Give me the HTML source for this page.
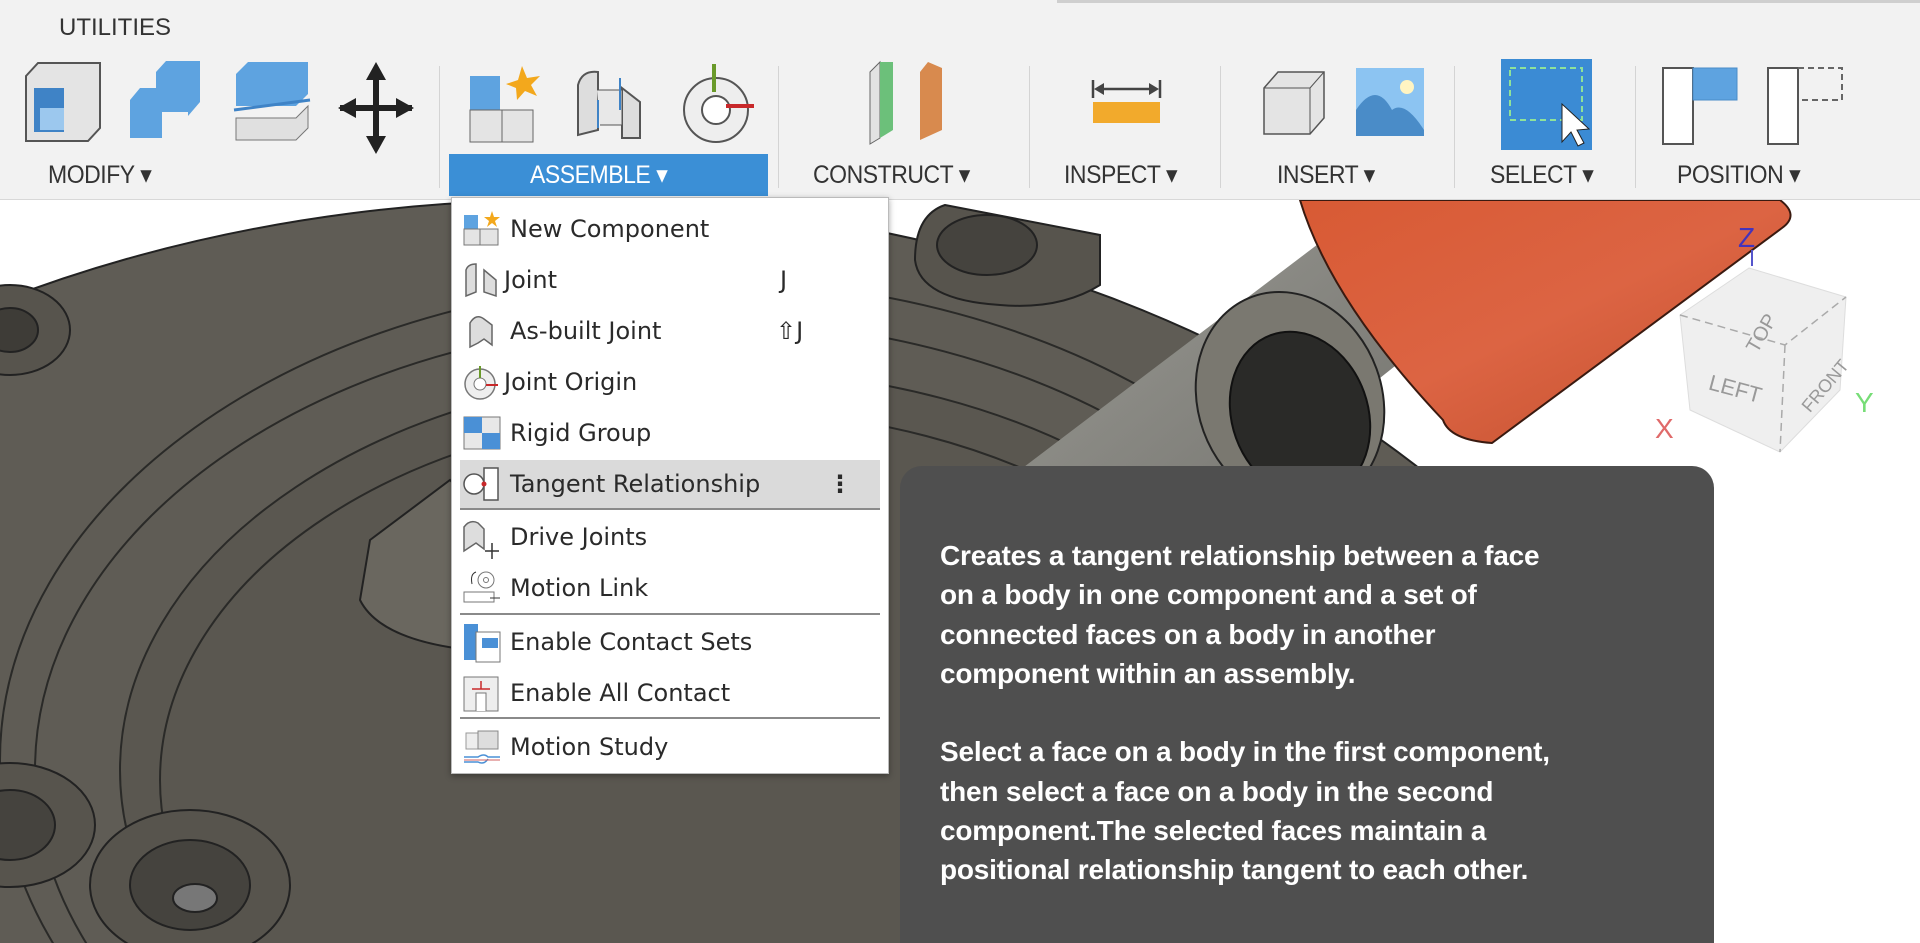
<!DOCTYPE html>
<html><head><meta charset="utf-8"><style>
*{margin:0;padding:0;box-sizing:border-box}
html,body{width:1920px;height:943px;overflow:hidden}
body{background:#fff;font-family:"DejaVu Sans","Liberation Sans",sans-serif;position:relative}
#tb{position:absolute;left:0;top:0;width:1920px;height:200px;background:#f2f2f2;border-bottom:1px solid #d8d8d8}
.lbl{position:absolute;top:160px;font-family:"Liberation Sans",sans-serif;font-size:25px;color:#333;letter-spacing:-0.5px;transform:scaleX(0.92);transform-origin:left}
.sep{position:absolute;top:66px;width:1px;height:122px;background:#d4d4d4}
#menu{position:absolute;left:451px;top:197px;width:438px;height:577px;background:#fff;border:1px solid #bbb;box-shadow:0 2px 6px rgba(0,0,0,.35)}
.it{position:absolute;left:0;width:436px;height:50px;font-size:24px;color:#2a2a2a;line-height:50px}
.it span.t{position:absolute;left:58px}
.it svg{position:absolute;left:10px;top:7px}
.ms{position:absolute;left:0;width:428px;height:2px;background:#8a8a8a}
#tip{position:absolute;left:900px;top:466px;width:814px;height:477px;background:#4f4f4f;border-radius:22px 22px 0 0;color:#fff;font-family:"Liberation Sans",sans-serif;font-weight:bold;font-size:28px;line-height:39.3px;padding:70px 0 0 40px;letter-spacing:-0.2px;overflow:hidden}
</style></head><body>
<svg width="1920" height="943" style="position:absolute;left:0;top:0">
<defs><linearGradient id="og" x1="0" y1="0" x2="1" y2="1"><stop offset="0" stop-color="#d85a34"/><stop offset=".5" stop-color="#dc6443"/><stop offset="1" stop-color="#c04e2c"/></linearGradient>
<linearGradient id="tg" x1="0" y1="0" x2="1" y2="1"><stop offset="0" stop-color="#9a9a94"/><stop offset="1" stop-color="#6e6d68"/></linearGradient></defs>
<ellipse cx="560" cy="1000" rx="1150" ry="800" fill="#5f5c55" stroke="#222" stroke-width="2"/>
<ellipse cx="700" cy="760" rx="700" ry="480" fill="none" stroke="#2a2a28" stroke-width="2"/>
<ellipse cx="700" cy="770" rx="665" ry="450" fill="none" stroke="#2a2a28" stroke-width="2"/>
<ellipse cx="720" cy="770" rx="600" ry="400" fill="#5a5750" stroke="#2a2a28" stroke-width="2"/>
<ellipse cx="720" cy="780" rx="560" ry="370" fill="none" stroke="#2a2a28" stroke-width="2"/>
<path d="M370 540 L450 480 L560 600 L470 650 Q380 640 360 600Z" fill="#6a675f" stroke="#222" stroke-width="2"/>
<g fill="#57544d" stroke="#222" stroke-width="2">
<ellipse cx="10" cy="330" rx="60" ry="45"/><ellipse cx="10" cy="330" rx="28" ry="22" fill="#3e3c37"/>
<path d="M945 205 L1100 235 L1100 285 Q1060 310 1000 305 Q920 300 915 260 Q915 215 945 205Z"/><ellipse cx="987" cy="245" rx="50" ry="30" fill="#45433e"/>
<ellipse cx="10" cy="825" rx="85" ry="62"/><ellipse cx="10" cy="825" rx="45" ry="35" fill="#45433e"/>
<ellipse cx="190" cy="885" rx="100" ry="75"/><ellipse cx="190" cy="885" rx="60" ry="45" fill="#45433e"/><ellipse cx="195" cy="898" rx="22" ry="14" fill="#777"/>
</g>
<path d="M1020 470 L1330 235 L1440 330 L1140 570Z" fill="url(#tg)"/>
<ellipse cx="1290" cy="400" rx="92" ry="110" transform="rotate(-20 1290 400)" fill="#7a7870" stroke="#222" stroke-width="2"/>
<ellipse cx="1300" cy="415" rx="68" ry="85" transform="rotate(-20 1300 415)" fill="#2a2a28" stroke="#111" stroke-width="2"/>
<path d="M1300 200 L1780 200 Q1800 215 1782 228 L1492 443 Q1450 440 1443 420 Q1330 300 1300 200Z" fill="url(#og)" stroke="#3a1a10" stroke-width="2"/>
<path d="M1749 268 L1846 297 L1840 390 L1780 452 L1690 410 L1680 315Z" fill="#efefef" stroke="#ddd"/>
<path d="M1680 315 L1785 345 L1846 297 M1785 345 L1780 452" stroke="#aaa" stroke-width="1.5" stroke-dasharray="8 5" fill="none"/>
<text x="1720" y="320" font-family="Liberation Sans" font-size="20" fill="#999" transform="rotate(-60 1768 305)">TOP</text>
<text x="1708" y="395" font-family="Liberation Sans" font-size="22" fill="#999" transform="rotate(15 1730 390)">LEFT</text>
<text x="1792" y="405" font-family="Liberation Sans" font-size="18" fill="#999" transform="rotate(-50 1810 390)">FRONT</text>
<line x1="1752" y1="250" x2="1752" y2="266" stroke="#5555cc" stroke-width="2"/>
<text x="1738" y="247" font-family="Liberation Sans" font-size="28" fill="#4433bb">Z</text>
<text x="1655" y="438" font-family="Liberation Sans" font-size="28" fill="#e06a6a">X</text>
<text x="1855" y="412" font-family="Liberation Sans" font-size="28" fill="#77dd77">Y</text>
</svg>

<div id="tb">
<div style="position:absolute;left:1057px;top:0;width:863px;height:3px;background:#cfcfcf"></div>
<div style="position:absolute;left:59px;top:14px;font-family:'Liberation Sans',sans-serif;font-size:24px;color:#333">UTILITIES</div>
<svg width="1920" height="160" style="position:absolute;left:0;top:0">
<path d="M26 76 L38 63 L100 63 L100 128 L88 141 L26 141Z" fill="#e4e4e4" stroke="#555" stroke-width="2"/><rect x="34" y="88" width="30" height="44" fill="#3f83c6"/><rect x="40" y="108" width="24" height="22" fill="#9cc8ee"/>
<path d="M130 100 L140 88 L156 88 L156 72 L166 61 L200 61 L200 102 L188 116 L188 112 L162 112 L162 138 L130 138Z" fill="#5ea3e0"/>
<path d="M236 74 L248 62 L308 62 L308 94 L296 106 L236 106Z" fill="#5ea3e0"/><path d="M234 110 L310 100" stroke="#3f83c6" stroke-width="3"/><path d="M236 118 L296 118 L308 106 L308 128 L296 140 L236 140Z" fill="#e0e0e0" stroke="#777"/>
<path d="M376 78 L376 138 M340 108 L412 108" stroke="#222" stroke-width="6"/><path d="M376 62 L366 80 L386 80Z M376 154 L366 136 L386 136Z M338 108 L356 98 L356 118Z M414 108 L396 98 L396 118Z" fill="#222"/>
<rect x="470" y="76" width="30" height="40" fill="#5ea3e0"/><path d="M470 110 L470 142 L533 142 L533 110Z" fill="#e4e4e4" stroke="#666"/><line x1="502" y1="110" x2="502" y2="142" stroke="#666"/>
<polygon points="522,66 527,78 540,76 531,85 537,96 525,91 517,100 516,88 506,84 518,80" fill="#f3a81c"/>
<path d="M578 135 L578 85 Q582 70 598 72 L598 130Z" fill="#ddd" stroke="#555" stroke-width="2"/><path d="M622 138 L622 88 L640 102 L640 138Z" fill="#ddd" stroke="#555" stroke-width="2"/><path d="M597 90 L622 90 L622 125 L600 125" fill="#e8e8e8" stroke="#555"/><line x1="620" y1="78" x2="620" y2="110" stroke="#3f83c6" stroke-width="2"/><line x1="598" y1="100" x2="598" y2="128" stroke="#3f83c6" stroke-width="2"/>
<circle cx="716" cy="110" r="32" fill="#eee" stroke="#555" stroke-width="2"/><circle cx="716" cy="110" r="14" fill="#fff" stroke="#555" stroke-width="2"/><line x1="714" y1="64" x2="714" y2="92" stroke="#6a9a2a" stroke-width="4"/><line x1="726" y1="106" x2="754" y2="106" stroke="#c8282a" stroke-width="4"/>
<path d="M870 72 L870 144 L880 138 L880 62 Z" fill="#e2e2e2" stroke="#666"/><path d="M880 62 L893 62 L893 130 L880 138Z" fill="#6cc07a"/><path d="M928 62 L942 68 L942 130 L920 140 L920 72Z" fill="#d88a4e"/>
<path d="M1093 80 L1093 98 M1160 80 L1160 98 M1098 89 L1155 89" stroke="#444" stroke-width="2.5"/><path d="M1094 89 L1104 83 L1104 95Z M1159 89 L1149 83 L1149 95Z" fill="#444"/><rect x="1093" y="102" width="67" height="21" fill="#f2aa2c"/>
<path d="M1264 88 L1278 72 L1324 72 L1324 118 L1310 134 L1264 134Z" fill="#e4e4e4" stroke="#555" stroke-width="1.5"/><path d="M1310 134 L1310 88 L1324 72 M1264 88 L1310 88" stroke="#555" fill="none"/>
<rect x="1356" y="68" width="68" height="68" fill="#8cc4f2"/><path d="M1356 136 L1356 110 Q1376 80 1392 110 Q1405 100 1424 130 L1424 136Z" fill="#4a8cc8"/><circle cx="1407" cy="87" r="7" fill="#fff4c2"/>
<rect x="1501" y="59" width="91" height="91" fill="#3b8bd4"/><rect x="1510" y="68" width="72" height="52" fill="none" stroke="#8ee29a" stroke-width="2" stroke-dasharray="6 4"/><path d="M1562 104 L1562 142 L1571 132 L1578 146 L1584 143 L1577 130 L1589 129Z" fill="#fff" stroke="#222"/>
<rect x="1663" y="68" width="30" height="76" fill="#fff" stroke="#555" stroke-width="2"/><rect x="1693" y="68" width="44" height="32" fill="#5ea3e0" stroke="#4a8cc8"/>
<rect x="1768" y="68" width="30" height="76" fill="#fff" stroke="#555" stroke-width="2"/><path d="M1798 68 L1842 68 L1842 100 L1798 100" fill="none" stroke="#666" stroke-width="2" stroke-dasharray="6 4"/>
</svg>
<div class="sep" style="left:439px"></div><div class="sep" style="left:778px"></div><div class="sep" style="left:1029px"></div><div class="sep" style="left:1220px"></div><div class="sep" style="left:1454px"></div><div class="sep" style="left:1635px"></div>
<div class="lbl" style="left:48px">MODIFY ▾</div>
<div style="position:absolute;left:449px;top:154px;width:319px;height:42px;background:#3b8fd6"></div>
<div class="lbl" style="left:530px;color:#fff">ASSEMBLE ▾</div>
<div class="lbl" style="left:813px">CONSTRUCT ▾</div>
<div class="lbl" style="left:1064px">INSPECT ▾</div>
<div class="lbl" style="left:1277px">INSERT ▾</div>
<div class="lbl" style="left:1490px">SELECT ▾</div>
<div class="lbl" style="left:1677px">POSITION ▾</div>
</div>

<div id="menu">
<div class="it" style="top:6px"><svg width="40" height="36"><rect x="2" y="4" width="14" height="16" fill="#5ea3e0"/><rect x="2" y="18" width="34" height="16" fill="#e4e4e4" stroke="#777"/><line x1="18" y1="18" x2="18" y2="34" stroke="#777"/><polygon points="30,0 32,6 38,6 33,10 35,16 30,12 25,16 27,10 22,6 28,6" fill="#f3a81c"/></svg><span class="t">New Component</span></div>
<div class="it" style="top:57px"><svg width="40" height="36"><path d="M4 34 L4 8 Q6 2 14 2 L14 30Z" fill="#ddd" stroke="#666" stroke-width="1.5"/><path d="M22 8 L34 18 L34 34 L22 30Z" fill="#ddd" stroke="#666" stroke-width="1.5"/></svg><span class="t" style="left:52px">Joint</span><span style="position:absolute;left:328px">J</span></div>
<div class="it" style="top:108px"><svg width="40" height="36"><path d="M8 34 L8 10 Q14 0 22 6 L30 12 L30 32 L22 26 L16 30Z" fill="#ddd" stroke="#666" stroke-width="1.5"/></svg><span class="t">As-built Joint</span><span style="position:absolute;left:324px">⇧J</span></div>
<div class="it" style="top:159px"><svg width="40" height="36"><circle cx="18" cy="20" r="15" fill="#eee" stroke="#777" stroke-width="1.5"/><circle cx="18" cy="20" r="6" fill="#fff" stroke="#777"/><line x1="18" y1="2" x2="18" y2="14" stroke="#6a9a2a" stroke-width="2"/><line x1="24" y1="21" x2="36" y2="21" stroke="#c8282a" stroke-width="2"/></svg><span class="t" style="left:52px">Joint Origin</span></div>
<div class="it" style="top:210px"><svg width="40" height="36"><rect x="2" y="2" width="36" height="32" fill="#e8e8e8" stroke="#777"/><rect x="2" y="2" width="18" height="16" fill="#4a90d6"/><rect x="20" y="18" width="18" height="16" fill="#4a90d6"/></svg><span class="t">Rigid Group</span></div>
<div style="position:absolute;left:8px;top:262px;width:420px;height:48px;background:#dadada"></div>
<div class="it" style="top:261px"><svg width="40" height="36"><circle cx="12" cy="18" r="10" fill="#fff" stroke="#555" stroke-width="1.5"/><rect x="22" y="2" width="14" height="32" fill="#fff" stroke="#555" stroke-width="1.5"/><circle cx="22" cy="18" r="2.5" fill="#c8282a"/></svg><span class="t">Tangent Relationship</span><span style="position:absolute;left:376px;font-weight:bold">⋮</span></div>
<div class="ms" style="top:310px;left:8px;width:420px"></div>
<div class="it" style="top:314px"><svg width="40" height="40"><path d="M2 32 L2 8 Q8 0 16 4 L22 10 L22 30 L14 24 L8 28Z" fill="#ddd" stroke="#666" stroke-width="1.5"/><path d="M30 24 L30 40 M23 32 L37 32" stroke="#333" stroke-width="1.5"/></svg><span class="t">Drive Joints</span></div>
<div class="it" style="top:365px"><svg width="40" height="36"><circle cx="24" cy="10" r="8" fill="#fff" stroke="#777"/><circle cx="24" cy="10" r="2.5" fill="none" stroke="#777"/><path d="M10 14 Q8 4 14 2" fill="none" stroke="#333"/><rect x="2" y="22" width="30" height="10" fill="#fff" stroke="#777"/><path d="M28 28 L38 28" stroke="#333"/></svg><span class="t">Motion Link</span></div>
<div class="ms" style="top:415px;left:8px;width:420px"></div>
<div class="it" style="top:419px"><svg width="40" height="40"><rect x="2" y="0" width="14" height="36" fill="#4a90d6"/><rect x="14" y="8" width="24" height="30" fill="#fff" stroke="#777"/><rect x="20" y="14" width="16" height="10" fill="#4a90d6"/></svg><span class="t">Enable Contact Sets</span></div>
<div class="it" style="top:470px"><svg width="40" height="40"><rect x="2" y="2" width="34" height="34" fill="#eee" stroke="#777"/><path d="M14 36 L14 18 L24 18 L24 36" fill="#fff" stroke="#777"/><path d="M10 14 L28 14 M19 6 L19 14" stroke="#c8282a" stroke-width="1.5"/></svg><span class="t">Enable All Contact</span></div>
<div class="ms" style="top:519px;left:8px;width:420px"></div>
<div class="it" style="top:524px"><svg width="40" height="40"><rect x="4" y="4" width="18" height="16" fill="#eee" stroke="#999"/><rect x="16" y="2" width="20" height="18" fill="#ddd" stroke="#888"/><path d="M2 28 L16 28 Q22 24 26 28 L38 28 M2 33 L16 33 Q22 36 26 30" fill="none" stroke="#4a90d6" stroke-width="1.5"/><path d="M2 31 L38 31" stroke="#d06060" stroke-width="1"/></svg><span class="t">Motion Study</span></div>
</div>

<div id="tip">Creates a tangent relationship between a face<br>on a body in one component and a set of<br>connected faces on a body in another<br>component within an assembly.<br><br>Select a face on a body in the first component,<br>then select a face on a body in the second<br>component.The selected faces maintain a<br>positional relationship tangent to each other.</div>
</body></html>
